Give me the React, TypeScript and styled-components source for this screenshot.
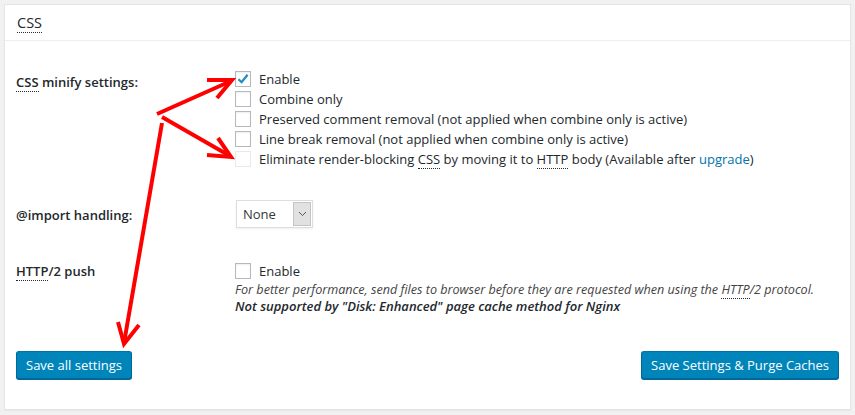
import React from "react";
import styled, { createGlobalStyle } from "styled-components";

/*--------------------------------------------------------------*/

const GlobalStyle = createGlobalStyle`
  html, body {
    margin: 0;
    padding: 0;
    background: #f1f1f1;
  }
  body {
    font-family: "Open Sans", "Noto Sans", sans-serif;
    font-size: 13px;
    color: #23282d;
  }
`;

interface CheckOption {
  label: React.ReactNode;
  checked?: boolean;
  disabled?: boolean;
}

/*--------------------------------------------------------------*/

const Checkbox: React.FC<{ checked?: boolean; disabled?: boolean }> = ({ checked, disabled }) => (
  <Box $disabled={disabled}>
    {checked && (
      <svg width="14" height="14" viewBox="0 0 14 14">
        <path d="M2.5 7.2 L5.6 10.2 L11.6 2.8" fill="none" stroke="#1e8cbe" strokeWidth="2.2" />
      </svg>
    )}
  </Box>
);

// Red annotation arrows drawn over the screenshot
const Arrows = () => (
  <ArrowLayer width="855" height="415" viewBox="0 0 855 415">
    <g stroke="#ff0000" strokeWidth="4" fill="none" strokeLinecap="butt" strokeLinejoin="miter">
      <path d="M157 114 L231 81" />
      <path d="M207 80 L232 80 L217 98" />
      <path d="M162 117 L230 156" />
      <path d="M207 155 L231 157 L218 138" />
      <path d="M162 123 L124 343" />
      <path d="M118 322 L124 344 L139 325" />
    </g>
  </ArrowLayer>
);

/*--------------------------------------------------------------*/

export default function App() {
  // Options of the css minify group
  const minifyOptions: CheckOption[] = [
    { label: "Enable", checked: true },
    { label: "Combine only" },
    { label: "Preserved comment removal (not applied when combine only is active)" },
    { label: "Line break removal (not applied when combine only is active)" },
    {
      label: (
        <>
          Eliminate render-blocking <Abbr>CSS</Abbr> by moving it to <Abbr>HTTP</Abbr> body{" "}
          <Note>
            (Available after <Link href="#">upgrade</Link>)
          </Note>
        </>
      ),
      disabled: true,
    },
  ];

  return (
    <Page>
      <GlobalStyle />
      <Panel>
        <PanelHeader>
          <Abbr>CSS</Abbr>
        </PanelHeader>

        <PanelBody>
          <Row>
            <Label>
              <Abbr>CSS</Abbr> minify settings:
            </Label>
            <Field>
              {minifyOptions.map((opt, i) => (
                <CheckRow key={i}>
                  <Checkbox checked={opt.checked} disabled={opt.disabled} />
                  <span>{opt.label}</span>
                </CheckRow>
              ))}
            </Field>
          </Row>

          <Row $gap={31}>
            <Label $offset={5}>@import handling:</Label>
            <Field>
              <SelectBox>
                <SelectValue>None</SelectValue>
                <SelectArrow>
                  <svg width="9" height="6" viewBox="0 0 9 6">
                    <path d="M1 1 L4.5 4.5 L8 1" fill="none" stroke="#555" strokeWidth="1" />
                  </svg>
                </SelectArrow>
              </SelectBox>
            </Field>
          </Row>

          <Row $gap={33}>
            <Label $offset={0}>
              <Abbr>HTTP</Abbr>/2 push
            </Label>
            <Field>
              <CheckRow>
                <Checkbox />
                <span>Enable</span>
              </CheckRow>
              <Description>
                For better performance, send files to browser before they are requested when using the{" "}
                <Abbr>HTTP</Abbr>/2 protocol.
                <br />
                <strong>Not supported by "Disk: Enhanced" page cache method for Nginx</strong>
              </Description>
            </Field>
          </Row>

          <ButtonBar>
            <Button>Save all settings</Button>
            <Button>Save Settings &amp; Purge Caches</Button>
          </ButtonBar>
        </PanelBody>
      </Panel>
      <Arrows />
    </Page>
  );
}

/*--------------------------------------------------------------*/

const Page = styled.div`
  position: relative;
  width: 855px;
  height: 415px;
  padding: 4px 4px 0 4px;
  box-sizing: border-box;
`;

const Panel = styled.div`
  background: #fff;
  border: 1px solid #e5e5e5;
  box-shadow: 0 1px 1px rgba(0, 0, 0, 0.04);
  height: 406px;
  box-sizing: border-box;
`;

const PanelHeader = styled.h3`
  margin: 0;
  height: 36px;
  box-sizing: border-box;
  padding: 8px 12px 0;
  font-size: 14.5px;
  font-weight: 400;
  line-height: 20px;
  border-bottom: 1px solid #eee;
`;

const PanelBody = styled.div`
  padding: 28px 11px 0 11px;
`;

const Row = styled.div<{ $gap?: number }>`
  display: flex;
  align-items: flex-start;
  margin-top: ${({ $gap }) => $gap ?? 0}px;
`;

const Label = styled.div<{ $offset?: number }>`
  width: 219px;
  flex-shrink: 0;
  padding-top: ${({ $offset }) => $offset ?? 3}px;
  line-height: 20px;
  font-weight: 600;
  font-size: 13px;
`;

const Field = styled.div`
  display: flex;
  flex-direction: column;
`;

const CheckRow = styled.label`
  display: flex;
  align-items: center;
  gap: 8px;
  height: 20px;
  line-height: 20px;
  white-space: nowrap;
`;

const Box = styled.span<{ $disabled?: boolean }>`
  display: inline-flex;
  align-items: center;
  justify-content: center;
  width: 16px;
  height: 16px;
  box-sizing: border-box;
  border: 1px solid ${({ $disabled }) => ($disabled ? "#e8e9ea" : "#b4b9be")};
  background: #fff;
  box-shadow: ${({ $disabled }) => ($disabled ? "none" : "inset 0 1px 2px rgba(0, 0, 0, 0.07)")};
`;

const Abbr = styled.abbr`
  text-decoration: none;
  border-bottom: 1px dotted #23282d;
`;

const Note = styled.span`
  font-size: 13px;
`;

const Link = styled.a`
  color: #0073aa;
  text-decoration: none;
`;

const SelectBox = styled.div`
  display: inline-flex;
  align-items: stretch;
  width: 77px;
  height: 28px;
  box-sizing: border-box;
  border: 1px solid #ddd;
  background: #fff;
  box-shadow: 0 1px 2px rgba(0, 0, 0, 0.07);
  margin-left: 1px;
  color: #32373c;
`;

const SelectValue = styled.span`
  flex: 1;
  padding-left: 6px;
  line-height: 26px;
`;

const SelectArrow = styled.span`
  width: 16px;
  margin: 1px 1px 1px 0;
  display: flex;
  align-items: center;
  justify-content: center;
  background: #e1e1e1;
  border: 1px solid #c4c4c4;
`;

const Description = styled.p`
  margin: 0;
  font-style: italic;
  font-size: 12.6px;
  line-height: 17px;
  color: #444;

  strong {
    font-size: 13px;
    color: #23282d;
    font-weight: 600;
  }
`;

const ButtonBar = styled.div`
  display: flex;
  justify-content: space-between;
  margin-top: 36px;
`;

const Button = styled.button`
  height: 28px;
  padding: 0 9px 1px;
  font-family: inherit;
  font-size: 13px;
  line-height: 26px;
  color: #fff;
  background: #0085ba;
  border: 1px solid #0073aa;
  border-color: #0073aa #006799 #006799;
  border-radius: 3px;
  box-shadow: 0 1px 0 #006799;
  cursor: pointer;
`;

const ArrowLayer = styled.svg`
  position: absolute;
  left: 0;
  top: 0;
  pointer-events: none;
`;
